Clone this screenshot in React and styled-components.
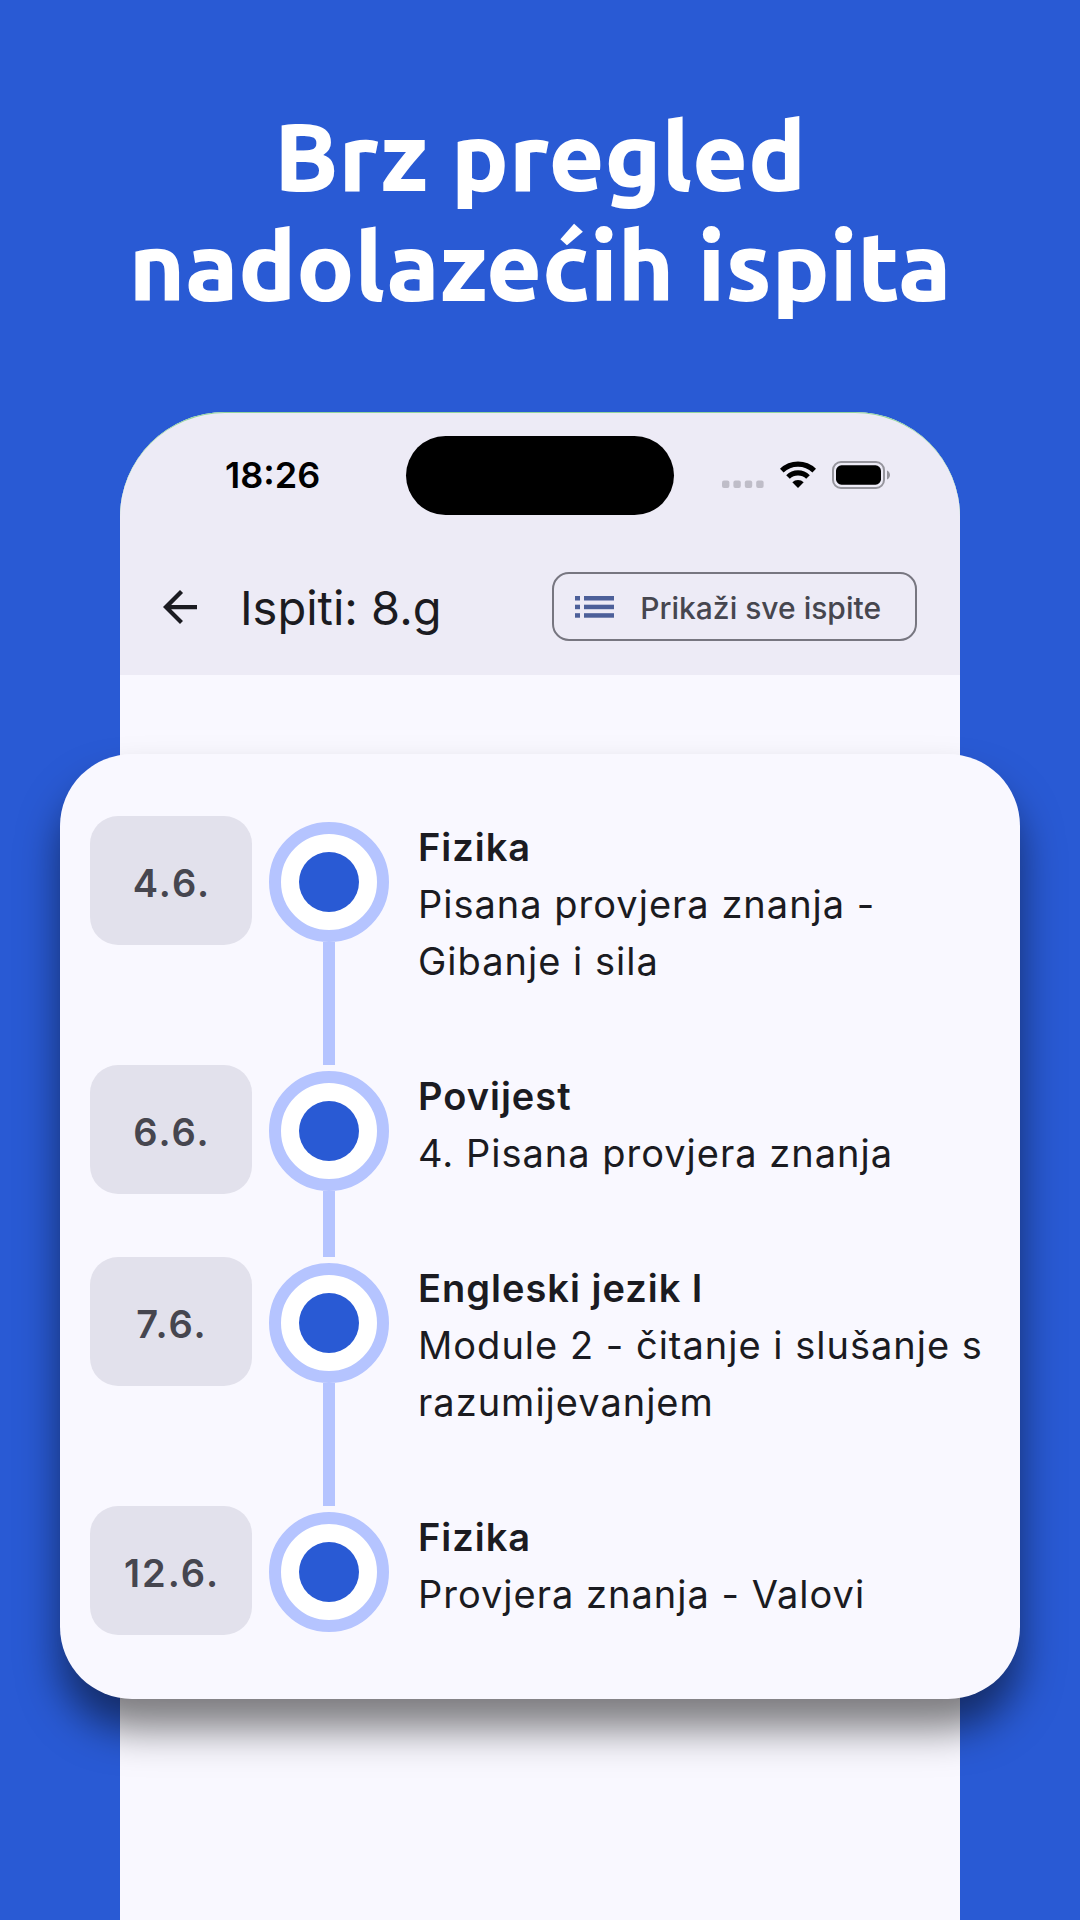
import React from "react";
import styled, { createGlobalStyle } from "styled-components";

const GlobalStyle = createGlobalStyle`
  *, *::before, *::after { box-sizing: border-box; }
  body { margin: 0; background: #295ad4; font-family: Inter, Roboto, sans-serif; }
  h1, h2, h3, p, ol { margin: 0; padding: 0; }
  button { font: inherit; color: inherit; }
`;

const Page = styled.main`
  min-height: 100vh;
  display: flex;
  flex-direction: column;
  padding-top: 101px;
`;

const Headline = styled.h1`
  padding: 0 60px;
  color: #fff;
  font-family: Ubuntu, "Noto Sans", "Open Sans", sans-serif;
  font-size: 96px;
  font-weight: 800;
  line-height: 110px;
  text-align: center;
`;

const Phone = styled.section`
  flex: 1;
  margin: 91px 120px 0;
  background: #f9f8ff;
  border-radius: 105px 105px 0 0;
`;

const PhoneTop = styled.header`
  background: #edebf6;
  border-top: 1px solid #93d59d;
  border-radius: 105px 105px 0 0;
`;

const StatusBar = styled.div`
  display: grid;
  grid-template-columns: 1fr 268px 1fr;
  align-items: center;
  height: 125px;
`;

const Clock = styled.time`
  padding: 0 0 2px 105px;
  color: #000;
  font-size: 36px;
  font-weight: 600;
  line-height: 44px;
`;

const Island = styled.div`
  height: 79px;
  border-radius: 40px;
  background: #000;
`;

const StatusIcons = styled.div`
  display: flex;
  justify-content: flex-end;
  align-items: center;
  gap: 16px;
  padding: 0 70px 2px 0;
`;

const AppBar = styled.div`
  display: flex;
  align-items: center;
  height: 137px;
  padding: 0 43px 0 36px;
`;

const BackButton = styled.button`
  display: flex;
  align-items: center;
  justify-content: center;
  width: 48px;
  height: 48px;
  padding: 0;
  border: 0;
  background: none;
`;

const ScreenTitle = styled.h2`
  flex: 1;
  padding: 2px 0 0 36px;
  color: #1b1b21;
  font-size: 47px;
  font-weight: 400;
  line-height: 56px;
`;

const OutlinedButton = styled.button`
  display: flex;
  align-items: center;
  gap: 26px;
  height: 69px;
  padding: 0 34px 0 21px;
  border: 2px solid #777680;
  border-radius: 17px;
  background: none;
  color: #46464f;
  font-size: 30px;
  font-weight: 500;
  white-space: nowrap;
`;

const ButtonLabel = styled.span`
  padding-top: 2px;
`;

const Card = styled.section`
  margin: 79px -60px 0;
  padding: 62px 30px 64px;
  border-radius: 72px;
  background: #f9f8ff;
  box-shadow: 0 30px 40px rgba(0, 0, 0, 0.5);
`;

const ExamList = styled.ol`
  list-style: none;
`;

const Exam = styled.li`
  display: grid;
  grid-template-columns: 162px 120px 1fr;
  column-gap: 17px;
`;

const DateChip = styled.time`
  display: flex;
  align-items: center;
  justify-content: center;
  height: 129px;
  padding: 4px 0 0 2px;
  border-radius: 28px;
  background: #e2e1ec;
  color: #46464f;
  font-size: 38px;
  font-weight: 600;
  letter-spacing: 2px;
`;

const Track = styled.div`
  display: flex;
  flex-direction: column;
  align-items: center;
  padding-top: 6px;
`;

const Marker = styled.span`
  display: flex;
  align-items: center;
  justify-content: center;
  width: 120px;
  height: 120px;
  border: 12px solid #b5c4ff;
  border-radius: 50%;
  background: #fff;

  &::after {
    content: "";
    width: 60px;
    height: 60px;
    border-radius: 50%;
    background: #295ad4;
  }
`;

const Connector = styled.span`
  flex: 1;
  width: 12px;
  background: #b5c4ff;
`;

const ExamText = styled.div`
  padding: 2px 0 ${(p) => (p.$last ? 0 : 75)}px 12px;
  color: #1b1b21;
  font-size: 38px;
  line-height: 57px;
  letter-spacing: 1px;
`;

const Subject = styled.h3`
  font-size: 38px;
  font-weight: 600;
  line-height: 58px;
`;

const ArrowBack = () => (
  <svg width="34" height="34" viewBox="4 4 16 16" fill="#1b1b21" aria-hidden="true">
    <path d="M20 11H7.83l5.59-5.59L12 4l-8 8 8 8 1.41-1.41L7.83 13H20v-2z" />
  </svg>
);

const ListIcon = () => (
  <svg width="39" height="22" viewBox="0 0 39 22" fill="#4c5f99" aria-hidden="true">
    {[0, 8.7, 17.2].map((y) => (
      <g key={y}>
        <rect x="0" y={y} width="5" height="4.5" />
        <rect x="9" y={y} width="30" height="4.5" />
      </g>
    ))}
  </svg>
);

const SignalDots = () => (
  <svg width="42" height="27" viewBox="0 0 42 27" fill="#bfbdc8" aria-hidden="true">
    {[0, 11.4, 22.8, 34.2].map((x) => (
      <rect key={x} x={x} y="19.6" width="7.4" height="7.4" rx="2" />
    ))}
  </svg>
);

const Wifi = () => (
  <svg width="36" height="27" viewBox="0 0 36 27" aria-hidden="true">
    <g fill="none" stroke="#000" strokeWidth="5.2">
      <path d="M1.8 9.7A23.4 23.4 0 0 1 34.2 9.7" />
      <path d="M8 16A14.4 14.4 0 0 1 28 16" />
    </g>
    <path d="M18 27l-5.7-5.7a8.2 8.2 0 0 1 11.4 0z" />
  </svg>
);

const Battery = () => (
  <svg width="58" height="28" viewBox="0 0 58 28" aria-hidden="true">
    <rect x="1" y="1" width="51" height="26" rx="8" fill="none" stroke="#96959d" strokeWidth="2" />
    <rect x="4" y="4.3" width="45" height="19.4" rx="5.5" fill="#000" />
    <path d="M55 9.5c4 1.8 4 7.2 0 9z" fill="#96959d" />
  </svg>
);

const exams = [
  { date: "4.6.", iso: "06-04", subject: "Fizika", note: "Pisana provjera znanja - Gibanje i sila" },
  { date: "6.6.", iso: "06-06", subject: "Povijest", note: "4. Pisana provjera znanja" },
  { date: "7.6.", iso: "06-07", subject: "Engleski jezik I", note: "Module 2 - čitanje i slušanje s razumijevanjem" },
  { date: "12.6.", iso: "06-12", subject: "Fizika", note: "Provjera znanja - Valovi" },
];

export default function App() {
  return (
    <>
      <GlobalStyle />
      <Page>
        <Headline>
          Brz pregled
          <br />
          nadolazećih ispita
        </Headline>
        <Phone>
          <PhoneTop>
            <StatusBar>
              <Clock>18:26</Clock>
              <Island />
              <StatusIcons>
                <SignalDots />
                <Wifi />
                <Battery />
              </StatusIcons>
            </StatusBar>
            <AppBar>
              <BackButton type="button" aria-label="Natrag">
                <ArrowBack />
              </BackButton>
              <ScreenTitle>Ispiti: 8.g</ScreenTitle>
              <OutlinedButton type="button">
                <ListIcon />
                <ButtonLabel>Prikaži sve ispite</ButtonLabel>
              </OutlinedButton>
            </AppBar>
          </PhoneTop>
          <Card>
            <ExamList>
              {exams.map((exam, i) => {
                const last = i === exams.length - 1;
                return (
                  <Exam key={exam.iso}>
                    <DateChip dateTime={exam.iso}>{exam.date}</DateChip>
                    <Track>
                      <Marker />
                      {!last && <Connector />}
                    </Track>
                    <ExamText $last={last}>
                      <Subject>{exam.subject}</Subject>
                      <p>{exam.note}</p>
                    </ExamText>
                  </Exam>
                );
              })}
            </ExamList>
          </Card>
        </Phone>
      </Page>
    </>
  );
}
